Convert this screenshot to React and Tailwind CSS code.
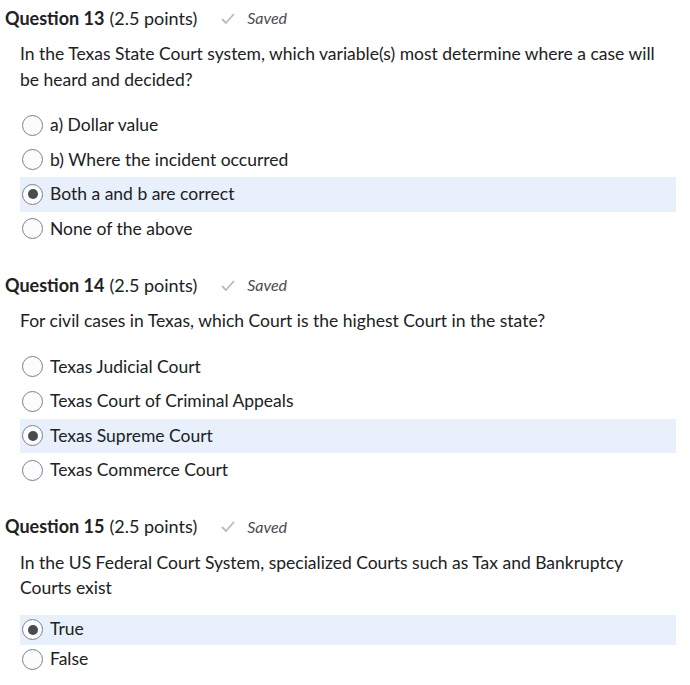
import React from 'react';

const questions = [
  {
    num: 13,
    text: 'In the Texas State Court system, which variable(s) most determine where a case will be heard and decided?',
    options: ['a) Dollar value', 'b) Where the incident occurred', 'Both a and b are correct', 'None of the above'],
    selected: 2,
    rowH: 'h-[34.5px]',
  },
  {
    num: 14,
    text: 'For civil cases in Texas, which Court is the highest Court in the state?',
    options: ['Texas Judicial Court', 'Texas Court of Criminal Appeals', 'Texas Supreme Court', 'Texas Commerce Court'],
    selected: 2,
    rowH: 'h-[34.5px]',
  },
  {
    num: 15,
    text: 'In the US Federal Court System, specialized Courts such as Tax and Bankruptcy Courts exist',
    options: ['True', 'False'],
    selected: 0,
    rowH: 'h-[30px]',
  },
];

const Radio = ({ checked }) => (
  <span className="flex h-[21px] w-[21px] shrink-0 items-center justify-center rounded-full border-[1.5px] border-[#7c8186] bg-[#fbfcfe]">
    {checked && <span className="h-[10px] w-[10px] rounded-full bg-[#494c4e]" />}
  </span>
);

const Question = ({ q }) => (
  <div className="flex flex-col">
    <div className="flex h-[36px] items-center pl-[5px] text-[18px]">
      <span className="font-bold text-[#202122]">Question {q.num}</span>
      <span className="ml-[5px] text-[#202122]">(2.5 points)</span>
      <svg className="ml-[24px] mt-[1px]" width="14" height="12" viewBox="0 0 14 12" fill="none">
        <path d="M1.5 6.5 L5 10 L12.5 1.5" stroke="#b8bcbf" strokeWidth="1.8" strokeLinecap="round" strokeLinejoin="round" />
      </svg>
      <span className="ml-[12px] text-[16px] italic text-[#494c4e]">Saved</span>
    </div>
    <p className="pl-[20px] pr-[20px] pt-[5px] text-[17.5px] leading-[25.5px] text-[#202122]">{q.text}</p>
    <div className={q.num === 15 ? 'mt-[14px] flex flex-col' : 'mt-[16px] flex flex-col'}>
      {q.options.map((opt, i) => (
        <div
          key={i}
          className={`ml-[20px] mr-[14px] flex ${q.rowH} items-center gap-[7px] pl-[2px] ${i === q.selected ? 'bg-[#e8f0fc]' : ''}`}
        >
          <Radio checked={i === q.selected} />
          <span className="text-[17.5px] text-[#202122]">{opt}</span>
        </div>
      ))}
    </div>
  </div>
);

export default function App() {
  return (
    <div className="h-[685px] w-[690px] overflow-hidden bg-white" style={{ fontFamily: 'Lato, "Noto Sans", sans-serif' }}>
      <div className="flex flex-col gap-[21px]">
        {questions.map((q) => (
          <Question key={q.num} q={q} />
        ))}
      </div>
    </div>
  );
}
